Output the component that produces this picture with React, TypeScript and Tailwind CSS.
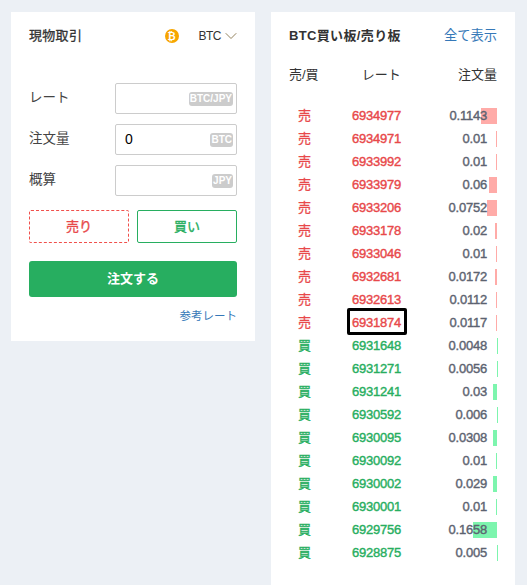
import { ChevronDown } from "lucide-react";

type Order = {
  side: "sell" | "buy";
  rate: number;
  amount: string;
  bar: number;
};

const orders: Order[] = [
  { side: "sell", rate: 6934977, amount: "0.1143", bar: 16 },
  { side: "sell", rate: 6934971, amount: "0.01", bar: 1 },
  { side: "sell", rate: 6933992, amount: "0.01", bar: 1 },
  { side: "sell", rate: 6933979, amount: "0.06", bar: 8 },
  { side: "sell", rate: 6933206, amount: "0.0752", bar: 10 },
  { side: "sell", rate: 6933178, amount: "0.02", bar: 2 },
  { side: "sell", rate: 6933046, amount: "0.01", bar: 1 },
  { side: "sell", rate: 6932681, amount: "0.0172", bar: 2 },
  { side: "sell", rate: 6932613, amount: "0.0112", bar: 1 },
  { side: "sell", rate: 6931874, amount: "0.0117", bar: 1 },
  { side: "buy", rate: 6931648, amount: "0.0048", bar: 0 },
  { side: "buy", rate: 6931271, amount: "0.0056", bar: 0 },
  { side: "buy", rate: 6931241, amount: "0.03", bar: 4 },
  { side: "buy", rate: 6930592, amount: "0.006", bar: 0 },
  { side: "buy", rate: 6930095, amount: "0.0308", bar: 4 },
  { side: "buy", rate: 6930092, amount: "0.01", bar: 1 },
  { side: "buy", rate: 6930002, amount: "0.029", bar: 4 },
  { side: "buy", rate: 6930001, amount: "0.01", bar: 1 },
  { side: "buy", rate: 6929756, amount: "0.1658", bar: 24 },
  { side: "buy", rate: 6928875, amount: "0.005", bar: 0 },
];

const FONT = "[font-family:'Liberation_Sans','Noto_Sans_CJK_JP',sans-serif]";

function Field({ label, unit, value }: { label: string; unit: string; value?: string }) {
  return (
    <div className="flex h-[31px] items-center">
      <span className="w-[86px] text-[13.5px] text-[#444]">{label}</span>
      <div className="flex h-[31px] w-[122px] items-center justify-between rounded-[2px] border border-[#ccc] pl-[9px] pr-[3px]">
        <span className="text-[14px] text-black">{value}</span>
        <span className="rounded-[3px] bg-[#ccc] px-[1px] text-[10px] font-bold leading-[14px] text-white">
          {unit}
        </span>
      </div>
    </div>
  );
}

function OrderRow({ order, marked }: { order: Order; marked: boolean }) {
  const sell = order.side === "sell";
  return (
    <div className="relative flex h-[23px] items-center">
      <span
        className={`mt-[1px] w-[31px] text-center text-[13px] [-webkit-text-stroke:0.3px] ${sell ? "text-[#e8484a]" : "text-[#27ae60]"}`}
      >
        {sell ? "売" : "買"}
      </span>
      <span
        className={`relative ml-[32px] text-[13px] tracking-[-0.23px] [-webkit-text-stroke:0.4px] ${sell ? "text-[#e8484a]" : "text-[#27ae60]"}`}
      >
        {order.rate}
        {marked && (
          <span className="absolute -bottom-[3px] -left-[5px] -right-[6px] -top-[5px] rounded-[2px] border-[3px] border-black" />
        )}
      </span>
      <span
        className={`absolute top-[4px] h-[16px] ${sell ? "bg-[#ffaba8]" : "bg-[#7df5ae]"}`}
        style={{
          width: Math.max(order.bar, 1),
          right: order.bar === 0 ? -1 : 0,
        }}
      />
      <span className="relative ml-auto mr-[10px] text-[13px] tracking-[-0.23px] text-[#5c6370] [-webkit-text-stroke:0.4px]">
        {order.amount}
      </span>
    </div>
  );
}

export default function App() {
  return (
    <div className={`flex h-[585px] items-start gap-4 overflow-hidden bg-[#ecf0f5] pl-[11px] pt-[12px] ${FONT}`}>
      <section className="h-[329px] w-[244px] bg-white px-[18px] pt-[15px]">
        <div className="flex h-[18px] items-center">
          <h2 className="text-[13px] tracking-[0.3px] text-[#333] [-webkit-text-stroke:0.3px]">現物取引</h2>
          <span className="ml-auto flex h-[14px] w-[14px] items-center justify-center rounded-full bg-[#f7a600] text-[10px] font-bold text-white">
            ₿
          </span>
          <span className="ml-[20px] text-[12px] tracking-[-0.5px] text-[#333]">BTC</span>
          <ChevronDown className="-mr-[4px] text-[#94835e]" size={20} strokeWidth={1.2} />
        </div>

        <div className="mt-[38px] flex flex-col gap-[10px]">
          <Field label="レート" unit="BTC/JPY" />
          <Field label="注文量" unit="BTC" value="0" />
          <Field label="概算" unit="JPY" />
        </div>

        <div className="mt-[14px] flex gap-2">
          <button className="h-[33px] flex-1 rounded-[2px] border border-dashed border-[#f0504c] text-[13px] text-[#e8484a] [-webkit-text-stroke:0.35px]">
            売り
          </button>
          <button className="h-[33px] flex-1 rounded-[2px] border border-[#27ae60] text-[13px] text-[#27ae60] [-webkit-text-stroke:0.35px]">
            買い
          </button>
        </div>

        <button className="mt-[18px] h-[36px] w-full rounded-[3px] bg-[#27ae60] text-[13px] font-bold text-white">
          注文する
        </button>

        <div className="mt-[11px] text-right text-[11.5px] text-[#3578b8]">参考レート</div>
      </section>

      <section className="h-[573px] w-[244px] bg-white px-[18px] pt-[15px]">
        <div className="flex h-[18px] items-center justify-between">
          <h2 className="text-[13px] font-bold tracking-[0.35px] text-[#333]">BTC買い板/売り板</h2>
          <a className="text-[13.25px] text-[#3578b8]">全て表示</a>
        </div>

        <div className="mt-[21px] flex h-[18px] items-center text-[13px] text-[#333]">
          <span>売/買</span>
          <span className="ml-[43px]">レート</span>
          <span className="ml-auto">注文量</span>
        </div>

        <div className="mt-[20px]">
          {orders.map((order) => (
            <OrderRow key={order.rate} order={order} marked={order.rate === 6931874} />
          ))}
        </div>
      </section>
    </div>
  );
}
